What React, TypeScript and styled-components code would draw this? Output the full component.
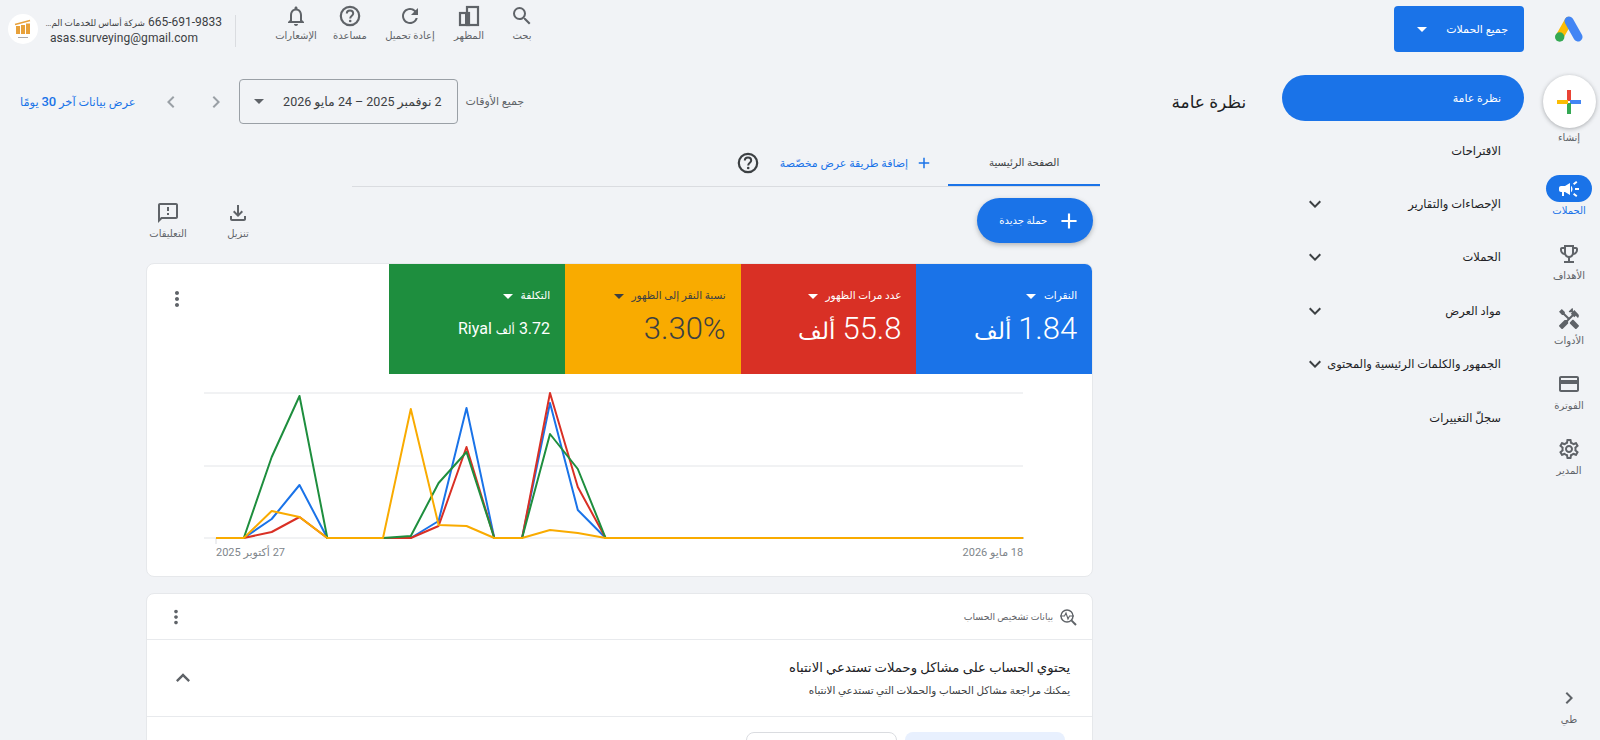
import React from "react";
import styled, { createGlobalStyle } from "styled-components";
import {
  MdAdd,
  MdCampaign,
  MdChevronLeft,
  MdChevronRight,
  MdExpandLess,
  MdExpandMore,
  MdHandyman,
  MdMoreVert,
  MdOutlineCreditCard,
  MdOutlineEmojiEvents,
  MdOutlineFeedback,
  MdOutlineFileDownload,
  MdOutlineNotifications,
  MdOutlineSettings,
  MdRefresh,
  MdSearch,
} from "react-icons/md";

const GlobalStyle = createGlobalStyle`
  html, body {
    margin: 0;
    padding: 0;
    background: #f1f3f6;
    overflow: hidden;
  }
  * { box-sizing: border-box; }
`;

const Page = styled.div`
  width: 1600px;
  height: 740px;
  overflow: hidden;
  display: flex;
  flex-direction: column;
  background: #f1f3f6;
  color: #3c4043;
  font-family: Roboto, "Liberation Sans", "DejaVu Sans", sans-serif;
`;

/* top bar */
const TopBar = styled.header`
  flex: 0 0 68px;
  display: flex;
  align-items: flex-start;
  padding: 6px 17px 0 8px;
`;
const LogoSlot = styled.div`
  width: 28px;
  height: 26px;
  margin-top: 10px;
  margin-left: 31px;
`;
const ScopeButton = styled.button`
  width: 130px;
  height: 46px;
  display: flex;
  align-items: center;
  justify-content: space-between;
  padding: 0 16px 0 23px;
  border: 0;
  border-radius: 4px;
  background: #1a73e8;
  color: #fff;
  font: inherit;
  font-size: 11px;
`;
const Caret = styled.span<{ $color?: string }>`
  flex: none;
  width: 0;
  height: 0;
  border-left: 5px solid transparent;
  border-right: 5px solid transparent;
  border-top: 5px solid ${(p) => p.$color || "#fff"};
`;
const TopGroup = styled.div`
  margin-right: auto;
  display: flex;
  align-items: flex-start;
`;
const Action = styled.div<{ $w: number }>`
  width: ${(p) => p.$w}px;
  margin-top: -2px;
  display: flex;
  flex-direction: column;
  align-items: center;
  color: #5f6368;
  font-size: 10px;
  line-height: 14px;
  svg { display: block; margin-bottom: 1px; }
`;
const ActionDivider = styled.div`
  width: 1px;
  height: 32px;
  margin: 9px 35px 0 13px;
  background: #dadce0;
`;
const Account = styled.div`
  width: 172px;
  margin-top: 9px;
  display: flex;
  flex-direction: column;
  font-size: 12px;
  line-height: 15px;
  color: #3c4043;
`;
const AccountName = styled.div`
  display: flex;
  align-items: baseline;
  gap: 3px;
  white-space: nowrap;
`;
const AccountOrg = styled.span`
  font-size: 8.8px;
`;
const Email = styled.div`
  align-self: flex-end;
  letter-spacing: 0.05px;
`;
const Avatar = styled.div`
  width: 30px;
  height: 30px;
  margin: 8px 12px 0 0;
  border-radius: 50%;
  background: #fff;
  display: flex;
  align-items: center;
  justify-content: center;
`;

/* body columns */
const Columns = styled.div`
  flex: 1;
  display: flex;
  min-height: 0;
`;
const Rail = styled.nav`
  flex: 0 0 62px;
  display: flex;
  flex-direction: column;
  align-items: center;
  padding: 7px 0 13px;
`;
const CreateCircle = styled.div`
  width: 53px;
  height: 53px;
  border-radius: 50%;
  background: #fff;
  box-shadow: 0 1px 4px rgba(60, 64, 67, 0.4);
  display: flex;
  align-items: center;
  justify-content: center;
`;
const CreateLabel = styled.div`
  margin: 3px 0 30px;
  font-size: 10px;
  line-height: 14px;
  color: #5f6368;
`;
const RailList = styled.div`
  display: flex;
  flex-direction: column;
  gap: 22px;
`;
const RailItem = styled.div<{ $active?: boolean; $bottom?: boolean }>`
  display: flex;
  flex-direction: column;
  align-items: center;
  gap: 2px;
  font-size: 10px;
  line-height: 14px;
  color: ${(p) => (p.$active ? "#1a73e8" : "#5f6368")};
  margin-top: ${(p) => (p.$bottom ? "auto" : "0")};
`;
const RailPill = styled.div<{ $active?: boolean }>`
  width: 46px;
  height: 27px;
  border-radius: 14px;
  display: flex;
  align-items: center;
  justify-content: center;
  background: ${(p) => (p.$active ? "#1a73e8" : "transparent")};
  color: ${(p) => (p.$active ? "#fff" : "#5f6368")};
`;
const SideNav = styled.nav`
  flex: 0 0 241px;
  margin-right: 14px;
  padding-top: 7px;
`;
const NavPill = styled.div`
  height: 46px;
  margin-bottom: 3px;
  border-radius: 23px;
  background: #1a73e8;
  color: #fff;
  display: flex;
  align-items: center;
  padding: 0 23px;
  font-size: 11px;
  font-weight: 500;
`;
const NavItem = styled.div`
  height: 53.4px;
  display: flex;
  align-items: center;
  justify-content: space-between;
  padding: 0 23px 0 21px;
  font-size: 11.5px;
  white-space: nowrap;
  color: #202124;
  svg { color: #3c4043; }
`;

/* main column */
const Main = styled.main`
  flex: 1;
  min-width: 0;
  padding: 11px 36px 0 20px;
`;
const HeaderRow = styled.div`
  height: 45px;
  display: flex;
  align-items: center;
`;
const Title = styled.h1`
  margin: 0;
  font-size: 17px;
  font-weight: 400;
  color: #202124;
`;
const DateGroup = styled.div`
  margin-right: auto;
  display: flex;
  align-items: center;
`;
const MutedLabel = styled.span`
  font-size: 11px;
  color: #5f6368;
  margin-left: 8px;
`;
const DateBox = styled.div`
  width: 219px;
  height: 45px;
  margin-left: 11px;
  display: flex;
  align-items: center;
  justify-content: space-between;
  padding: 0 15px 0 14px;
  border: 1px solid #9aa0a6;
  border-radius: 4px;
  font-size: 12.5px;
  color: #3c4043;
`;
const PagerIcon = styled.span`
  display: flex;
  color: #9aa0a6;
  margin-left: 21px;
`;
const ViewLink = styled.a`
  margin-right: 2px;
  font-size: 11.4px;
  color: #1a73e8;
  white-space: nowrap;
  b {
    font-size: 13px;
    font-weight: 500;
  }
`;

const Tabs = styled.div`
  height: 47px;
  margin: 16px 146px 0 0;
  width: 748px;
  display: flex;
  align-items: stretch;
  border-bottom: 1px solid #dadce0;
`;
const HomeTab = styled.div`
  width: 152px;
  display: flex;
  align-items: center;
  justify-content: center;
  font-size: 10.3px;
  font-weight: 500;
  color: #3c4043;
  border-bottom: 2px solid #1a73e8;
`;
const AddView = styled.div`
  margin-right: 15px;
  display: flex;
  align-items: center;
  gap: 7px;
  font-size: 11px;
  color: #1a73e8;
`;
const TabHelp = styled.div`
  margin-right: 20px;
  display: flex;
  align-items: center;
  color: #3c4043;
`;

const Toolbar = styled.div`
  height: 45px;
  margin: 11px 153px 0 118px;
  display: flex;
  align-items: flex-start;
  justify-content: space-between;
`;
const NewCampaign = styled.button`
  width: 116px;
  height: 45px;
  display: flex;
  align-items: center;
  gap: 9px;
  padding: 0 11px;
  border: 0;
  border-radius: 23px;
  background: #1a73e8;
  color: #fff;
  font: inherit;
  font-size: 10px;
  font-weight: 500;
  box-shadow: 0 2px 5px rgba(60, 64, 67, 0.35);
`;
const ToolGroup = styled.div`
  display: flex;
  gap: 10px;
  padding-top: 3px;
`;
const ToolItem = styled.div`
  width: 60px;
  display: flex;
  flex-direction: column;
  align-items: center;
  gap: 2px;
  font-size: 10px;
  line-height: 14px;
  color: #5f6368;
`;

const Card = styled.section`
  margin: 20px 153px 0 126px;
  background: #fff;
  border: 1px solid #e6e8eb;
  border-radius: 8px;
  overflow: hidden;
`;
const MetricRow = styled.div`
  height: 110px;
  display: flex;
`;
const Metric = styled.div<{ $bg: string; $fg: string }>`
  flex: 0 0 175.7px;
  padding: 25px 15px 0;
  background: ${(p) => p.$bg};
  color: ${(p) => p.$fg};
`;
const MetricLabel = styled.div`
  display: flex;
  align-items: center;
  gap: 8px;
  font-size: 10.5px;
  line-height: 14px;
`;
const MetricValue = styled.div<{ $small?: boolean }>`
  margin-top: ${(p) => (p.$small ? "15px" : "8px")};
  font-size: ${(p) => (p.$small ? "16px" : "31px")};
  line-height: ${(p) => (p.$small ? "22px" : "36px")};
  font-weight: ${(p) => (p.$small ? 400 : 300)};
  white-space: nowrap;
`;
const MetricUnit = styled.span`
  font-size: 0.74em;
`;
const KebabSlot = styled.div`
  flex: 1;
  display: flex;
  justify-content: flex-end;
  padding: 23px 0 0 18px;
  color: #5f6368;
`;
const ChartFrame = styled.svg`
  display: block;
  width: 945px;
  height: 170px;
`;
const AxisRow = styled.div`
  height: 32px;
  padding: 0 69px;
  display: flex;
  justify-content: space-between;
  font-size: 11px;
  line-height: 18px;
  color: #80868b;
`;

const DiagnosticsCard = styled(Card)`
  margin-top: 16px;
`;
const CardHead = styled.div`
  height: 46px;
  display: flex;
  align-items: center;
  padding: 0 15px 0 18px;
  gap: 6px;
  font-size: 9.3px;
  color: #5f6368;
  border-bottom: 1px solid #e8eaed;
`;
const HeadKebab = styled.span`
  display: flex;
  margin-right: auto;
  color: #5f6368;
`;
const IssueRow = styled.div`
  height: 77px;
  display: flex;
  align-items: center;
  justify-content: space-between;
  padding: 0 22px 0 22px;
  border-bottom: 1px solid #e8eaed;
  color: #5f6368;
`;
const IssueTitle = styled.div`
  font-size: 13.2px;
  line-height: 20px;
  color: #202124;
`;
const IssueSub = styled.div`
  margin-top: 5px;
  font-size: 10.4px;
  line-height: 15px;
  color: #3c4043;
`;
const ButtonRow = styled.div`
  display: flex;
  gap: 8px;
  padding: 15px 27px 0 0;
`;
const GhostBlock = styled.div<{ $primary?: boolean }>`
  width: ${(p) => (p.$primary ? "160px" : "151px")};
  height: 40px;
  border-radius: 8px;
  background: ${(p) => (p.$primary ? "#e8f0fe" : "#fff")};
  border: ${(p) => (p.$primary ? "0" : "1px solid #dadce0")};
`;

const AdsLogo = () => (
  <svg width="28" height="26" viewBox="0 0 28 26">
    <path d="M13.5 5 L5 20" stroke="#fbbc04" strokeWidth="8" strokeLinecap="round" />
    <path d="M14 5 L23 21" stroke="#4285f4" strokeWidth="9" strokeLinecap="round" />
    <circle cx="4.7" cy="21" r="4.7" fill="#34a853" />
  </svg>
);

const ColorPlus = () => (
  <svg width="24" height="24" viewBox="0 0 24 24">
    <rect x="10" y="0" width="4" height="11" fill="#ea4335" />
    <rect x="13" y="10" width="11" height="4" fill="#4285f4" />
    <rect x="10" y="13" width="4" height="11" fill="#34a853" />
    <rect x="0" y="10" width="11" height="4" fill="#fbbc04" />
  </svg>
);

const AppearanceIcon = () => (
  <svg width="24" height="24" viewBox="0 0 24 24" fill="none" stroke="currentColor" strokeWidth="2.2">
    <rect x="3" y="9" width="9" height="12" />
    <rect x="10" y="3" width="11" height="18" />
    <rect x="8" y="9" width="4" height="12" fill="currentColor" stroke="none" />
  </svg>
);

const HelpIcon = () => (
  <svg width="24" height="24" viewBox="0 0 24 24" fill="none" stroke="currentColor" strokeWidth="2.2">
    <circle cx="12" cy="12" r="9.2" />
    <path d="M8.8 9.6 C8.8 7.6 10.3 6.6 12 6.6 C13.9 6.6 15.2 7.8 15.2 9.5 C15.2 11.6 12.2 11.9 12.2 14.4" strokeWidth="2" />
    <circle cx="12.2" cy="17" r="1.3" fill="currentColor" stroke="none" />
  </svg>
);

const DiagnosticsIcon = () => (
  <svg width="18" height="18" viewBox="0 0 18 18" fill="none" stroke="#5f6368" strokeWidth="1.4">
    <circle cx="8" cy="8" r="6" />
    <path d="M12.4 12.4 L17 17" strokeWidth="2" />
    <path d="M1 8 H5.5 L7 5 L9 11 L10.5 8 H15" strokeWidth="1.1" />
  </svg>
);

const AvatarMark = () => (
  <svg width="24" height="24" viewBox="0 0 24 24">
    <path d="M4 7.5 L19 3.5" stroke="#e8a13a" strokeWidth="1.6" />
    <rect x="5" y="9" width="4" height="8" fill="#e8a13a" />
    <rect x="10" y="8" width="4" height="9" fill="#e8a13a" />
    <rect x="15" y="6.5" width="4" height="10.5" fill="#e8a13a" />
    <rect x="7" y="20" width="10" height="1" fill="#aaa" />
  </svg>
);

const railItems = [
  { label: "الأهداف", icon: <MdOutlineEmojiEvents size={24} /> },
  { label: "الأدوات", icon: <MdHandyman size={24} /> },
  { label: "الفوترة", icon: <MdOutlineCreditCard size={24} /> },
  { label: "المدير", icon: <MdOutlineSettings size={24} /> },
];

const navItems = [
  { label: "الاقتراحات" },
  { label: "الإحصاءات والتقارير", more: true },
  { label: "الحملات", more: true },
  { label: "مواد العرض", more: true },
  { label: "الجمهور والكلمات الرئيسية والمحتوى", more: true },
  { label: "سجلّ التغييرات" },
];

const metrics = [
  { label: "النقرات", value: "1.84", unit: "ألف", bg: "#1a73e8", fg: "#fff" },
  { label: "عدد مرات الظهور", value: "55.8", unit: "ألف", bg: "#d93025", fg: "#fff" },
  { label: "نسبة النقر إلى الظهور", value: "3.30%", unit: "", bg: "#f9ab00", fg: "#3c4043" },
  { label: "التكلفة", value: "3.72", unit: "ألف", suffix: "Riyal", bg: "#1e8e3e", fg: "#fff", small: true },
];

// y values are px measured off the chart, the tail of every series stays on the baseline
const series = [
  { color: "#1a73e8", ys: [0, 0, 19, 53, 0, 0, 0, 0, 17, 130, 0, 0, 135, 28, 0] },
  { color: "#d93025", ys: [0, 0, 6, 21, 0, 0, 0, 0, 12, 91, 0, 0, 145, 51, 0] },
  { color: "#1e8e3e", ys: [0, 0, 81, 142, 0, 0, 0, 2, 55, 86, 0, 0, 104, 69, 0] },
  { color: "#f9ab00", ys: [0, 0, 27, 21, 0, 0, 0, 129, 13, 12, 0, 0, 8, 5, 0] },
];
const BASE_Y = 164;
const STEP = 27.83;
const toPoints = (ys: number[]) => {
  const all = [...ys, ...Array(29 - ys.length + 1).fill(0)];
  return all.map((y, i) => `${(69 + i * STEP).toFixed(1)},${BASE_Y - y}`).join(" ");
};

const App = () => {
  return (
    <Page dir="rtl">
      <GlobalStyle />
      <TopBar>
        <LogoSlot>
          <AdsLogo />
        </LogoSlot>
        <ScopeButton>
          جميع الحملات
          <Caret />
        </ScopeButton>
        <TopGroup>
          <Action $w={50}><MdSearch size={24} />بحث</Action>
          <Action $w={56}><AppearanceIcon />المظهر</Action>
          <Action $w={62}><MdRefresh size={24} />إعادة تحميل</Action>
          <Action $w={58}><HelpIcon />مساعدة</Action>
          <Action $w={50}><MdOutlineNotifications size={24} />الإشعارات</Action>
          <ActionDivider />
          <Account>
            <AccountName>
              <bdi>665-691-9833</bdi>
              <AccountOrg>شركة أساس للخدمات الم…</AccountOrg>
            </AccountName>
            <Email dir="ltr">asas.surveying@gmail.com</Email>
          </Account>
          <Avatar>
            <AvatarMark />
          </Avatar>
        </TopGroup>
      </TopBar>
      <Columns>
        <Rail>
          <CreateCircle>
            <ColorPlus />
          </CreateCircle>
          <CreateLabel>إنشاء</CreateLabel>
          <RailList>
            <RailItem $active>
              <RailPill $active><MdCampaign size={24} /></RailPill>
              الحملات
            </RailItem>
            {railItems.map((item) => (
              <RailItem key={item.label}>
                <RailPill>{item.icon}</RailPill>
                {item.label}
              </RailItem>
            ))}
          </RailList>
          <RailItem $bottom>
            <RailPill><MdChevronRight size={24} /></RailPill>
            طي
          </RailItem>
        </Rail>
        <SideNav>
          <NavPill>نظرة عامة</NavPill>
          {navItems.map((item) => (
            <NavItem key={item.label}>
              {item.label}
              {item.more && <MdExpandMore size={24} />}
            </NavItem>
          ))}
        </SideNav>
        <Main>
          <HeaderRow>
            <Title>نظرة عامة</Title>
            <DateGroup>
              <MutedLabel>جميع الأوقات</MutedLabel>
              <DateBox>
                2 نوفمبر 2025 – 24 مايو 2026
                <Caret $color="#5f6368" />
              </DateBox>
              <PagerIcon><MdChevronRight size={24} /></PagerIcon>
              <PagerIcon><MdChevronLeft size={24} /></PagerIcon>
              <ViewLink>عرض بيانات آخر <b>30</b> يومًا</ViewLink>
            </DateGroup>
          </HeaderRow>
          <Tabs>
            <HomeTab>الصفحة الرئيسية</HomeTab>
            <AddView>
              <MdAdd size={18} />
              إضافة طريقة عرض مخصّصة
            </AddView>
            <TabHelp><HelpIcon /></TabHelp>
          </Tabs>
          <Toolbar>
            <NewCampaign>
              <MdAdd size={26} />
              حملة جديدة
            </NewCampaign>
            <ToolGroup>
              <ToolItem><MdOutlineFileDownload size={24} />تنزيل</ToolItem>
              <ToolItem><MdOutlineFeedback size={24} />التعليقات</ToolItem>
            </ToolGroup>
          </Toolbar>
          <Card>
            <MetricRow>
              {metrics.map((m) => (
                <Metric key={m.label} $bg={m.bg} $fg={m.fg}>
                  <MetricLabel>
                    {m.label}
                    <Caret $color={m.fg} />
                  </MetricLabel>
                  <MetricValue $small={m.small}>
                    {m.value} {m.unit && <MetricUnit>{m.unit}</MetricUnit>} {m.suffix}
                  </MetricValue>
                </Metric>
              ))}
              <KebabSlot><MdMoreVert size={24} /></KebabSlot>
            </MetricRow>
            <ChartFrame viewBox="0 0 945 170">
              {[19, 92, BASE_Y].map((y) => (
                <line key={y} x1="57" x2="876" y1={y} y2={y} stroke="#e3e5e8" strokeWidth="1" />
              ))}
              <line x1="69" x2="69" y1={BASE_Y} y2="170" stroke="#dadce0" />
              {series.map((s) => (
                <polyline key={s.color} points={toPoints(s.ys)} fill="none" stroke={s.color} strokeWidth="2" strokeLinejoin="round" />
              ))}
            </ChartFrame>
            <AxisRow>
              <span>18 مايو 2026</span>
              <span>27 أكتوبر 2025</span>
            </AxisRow>
          </Card>
          <DiagnosticsCard>
            <CardHead>
              <DiagnosticsIcon />
              بيانات تشخيص الحساب
              <HeadKebab><MdMoreVert size={22} /></HeadKebab>
            </CardHead>
            <IssueRow>
              <div>
                <IssueTitle>يحتوي الحساب على مشاكل وحملات تستدعي الانتباه</IssueTitle>
                <IssueSub>يمكنك مراجعة مشاكل الحساب والحملات التي تستدعي الانتباه</IssueSub>
              </div>
              <MdExpandLess size={28} />
            </IssueRow>
            <ButtonRow>
              <GhostBlock $primary />
              <GhostBlock />
            </ButtonRow>
          </DiagnosticsCard>
        </Main>
      </Columns>
    </Page>
  );
};
export default App;
